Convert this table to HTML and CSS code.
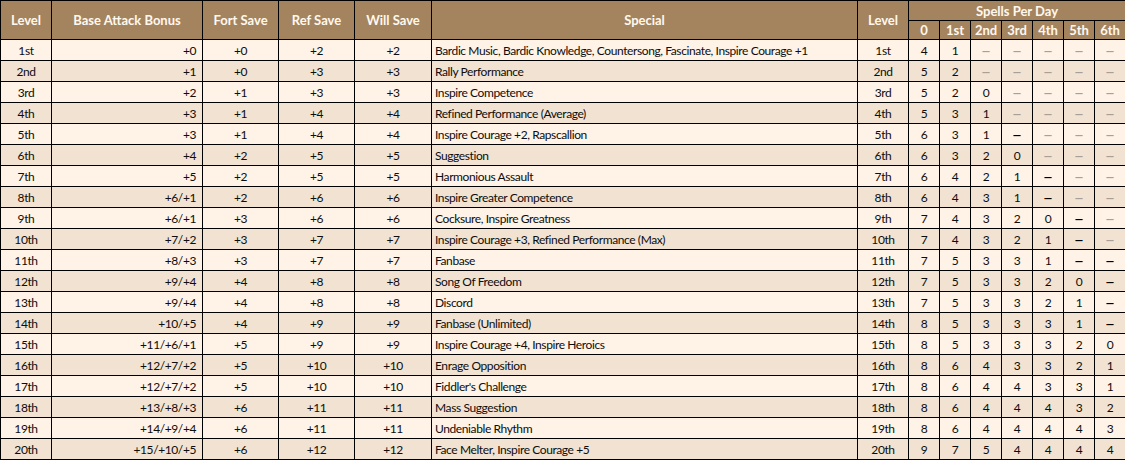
FILE: index.html
```html
<!DOCTYPE html>
<html>
<head>
<meta charset="utf-8">
<link rel="stylesheet" href="styles.css">
</head>
<body>
<table class="prog">
<colgroup>
<col class="c-lvl"><col class="c-bab"><col class="c-save"><col class="c-save"><col class="c-will"><col class="c-spec"><col class="c-lvl"><col class="c-sp"><col class="c-sp"><col class="c-sp"><col class="c-sp"><col class="c-sp"><col class="c-sp"><col class="c-sp">
</colgroup>
<thead>
<tr class="h1">
<th rowspan="2">Level</th><th rowspan="2">Base Attack Bonus</th><th rowspan="2">Fort Save</th><th rowspan="2">Ref Save</th><th rowspan="2">Will Save</th><th rowspan="2">Special</th><th rowspan="2">Level</th><th colspan="7">Spells Per Day</th>
</tr>
<tr class="h2">
<th>0</th><th>1st</th><th>2nd</th><th>3rd</th><th>4th</th><th>5th</th><th>6th</th>
</tr>
</thead>
<tbody>
<tr><td>1st</td><td class="r">+0</td><td>+0</td><td>+2</td><td>+2</td><td class="l">Bardic Music, Bardic Knowledge, Countersong, Fascinate, Inspire Courage +1</td><td>1st</td><td>4</td><td>1</td><td class="g">–</td><td class="g">–</td><td class="g">–</td><td class="g">–</td><td class="g">–</td></tr>
<tr><td>2nd</td><td class="r">+1</td><td>+0</td><td>+3</td><td>+3</td><td class="l">Rally Performance</td><td>2nd</td><td>5</td><td>2</td><td class="g">–</td><td class="g">–</td><td class="g">–</td><td class="g">–</td><td class="g">–</td></tr>
<tr><td>3rd</td><td class="r">+2</td><td>+1</td><td>+3</td><td>+3</td><td class="l">Inspire Competence</td><td>3rd</td><td>5</td><td>2</td><td>0</td><td class="g">–</td><td class="g">–</td><td class="g">–</td><td class="g">–</td></tr>
<tr><td>4th</td><td class="r">+3</td><td>+1</td><td>+4</td><td>+4</td><td class="l">Refined Performance (Average)</td><td>4th</td><td>5</td><td>3</td><td>1</td><td class="g">–</td><td class="g">–</td><td class="g">–</td><td class="g">–</td></tr>
<tr><td>5th</td><td class="r">+3</td><td>+1</td><td>+4</td><td>+4</td><td class="l">Inspire Courage +2, Rapscallion</td><td>5th</td><td>6</td><td>3</td><td>1</td><td class="b">–</td><td class="g">–</td><td class="g">–</td><td class="g">–</td></tr>
<tr><td>6th</td><td class="r">+4</td><td>+2</td><td>+5</td><td>+5</td><td class="l">Suggestion</td><td>6th</td><td>6</td><td>3</td><td>2</td><td>0</td><td class="g">–</td><td class="g">–</td><td class="g">–</td></tr>
<tr><td>7th</td><td class="r">+5</td><td>+2</td><td>+5</td><td>+5</td><td class="l">Harmonious Assault</td><td>7th</td><td>6</td><td>4</td><td>2</td><td>1</td><td class="b">–</td><td class="g">–</td><td class="g">–</td></tr>
<tr><td>8th</td><td class="r">+6/+1</td><td>+2</td><td>+6</td><td>+6</td><td class="l">Inspire Greater Competence</td><td>8th</td><td>6</td><td>4</td><td>3</td><td>1</td><td class="b">–</td><td class="g">–</td><td class="g">–</td></tr>
<tr><td>9th</td><td class="r">+6/+1</td><td>+3</td><td>+6</td><td>+6</td><td class="l">Cocksure, Inspire Greatness</td><td>9th</td><td>7</td><td>4</td><td>3</td><td>2</td><td>0</td><td class="b">–</td><td class="g">–</td></tr>
<tr><td>10th</td><td class="r">+7/+2</td><td>+3</td><td>+7</td><td>+7</td><td class="l">Inspire Courage +3, Refined Performance (Max)</td><td>10th</td><td>7</td><td>4</td><td>3</td><td>2</td><td>1</td><td class="b">–</td><td class="g">–</td></tr>
<tr><td>11th</td><td class="r">+8/+3</td><td>+3</td><td>+7</td><td>+7</td><td class="l">Fanbase</td><td>11th</td><td>7</td><td>5</td><td>3</td><td>3</td><td>1</td><td class="b">–</td><td class="b">–</td></tr>
<tr><td>12th</td><td class="r">+9/+4</td><td>+4</td><td>+8</td><td>+8</td><td class="l">Song Of Freedom</td><td>12th</td><td>7</td><td>5</td><td>3</td><td>3</td><td>2</td><td>0</td><td class="b">–</td></tr>
<tr><td>13th</td><td class="r">+9/+4</td><td>+4</td><td>+8</td><td>+8</td><td class="l">Discord</td><td>13th</td><td>7</td><td>5</td><td>3</td><td>3</td><td>2</td><td>1</td><td class="b">–</td></tr>
<tr><td>14th</td><td class="r">+10/+5</td><td>+4</td><td>+9</td><td>+9</td><td class="l">Fanbase (Unlimited)</td><td>14th</td><td>8</td><td>5</td><td>3</td><td>3</td><td>3</td><td>1</td><td class="b">–</td></tr>
<tr><td>15th</td><td class="r">+11/+6/+1</td><td>+5</td><td>+9</td><td>+9</td><td class="l">Inspire Courage +4, Inspire Heroics</td><td>15th</td><td>8</td><td>5</td><td>3</td><td>3</td><td>3</td><td>2</td><td>0</td></tr>
<tr><td>16th</td><td class="r">+12/+7/+2</td><td>+5</td><td>+10</td><td>+10</td><td class="l">Enrage Opposition</td><td>16th</td><td>8</td><td>6</td><td>4</td><td>3</td><td>3</td><td>2</td><td>1</td></tr>
<tr><td>17th</td><td class="r">+12/+7/+2</td><td>+5</td><td>+10</td><td>+10</td><td class="l">Fiddler's Challenge</td><td>17th</td><td>8</td><td>6</td><td>4</td><td>4</td><td>3</td><td>3</td><td>1</td></tr>
<tr><td>18th</td><td class="r">+13/+8/+3</td><td>+6</td><td>+11</td><td>+11</td><td class="l">Mass Suggestion</td><td>18th</td><td>8</td><td>6</td><td>4</td><td>4</td><td>4</td><td>3</td><td>2</td></tr>
<tr><td>19th</td><td class="r">+14/+9/+4</td><td>+6</td><td>+11</td><td>+11</td><td class="l">Undeniable Rhythm</td><td>19th</td><td>8</td><td>6</td><td>4</td><td>4</td><td>4</td><td>4</td><td>3</td></tr>
<tr><td>20th</td><td class="r">+15/+10/+5</td><td>+6</td><td>+12</td><td>+12</td><td class="l">Face Melter, Inspire Courage +5</td><td>20th</td><td>9</td><td>7</td><td>5</td><td>4</td><td>4</td><td>4</td><td>4</td></tr>
</tbody>
</table>
</body>
</html>
```
FILE: styles.css
```css
html, body {
  margin: 0;
  padding: 0;
  background: #ffffff;
}

.prog {
  border-collapse: collapse;
  table-layout: fixed;
  width: 1125px;
  font-family: "Lato", "Liberation Sans", sans-serif;
  font-size: 12px;
  color: #0d0d0d;
}

.c-lvl { width: 51px; }
.c-bab { width: 151px; }
.c-save { width: 76px; }
.c-will { width: 77px; }
.c-spec { width: 426px; }
.c-sp { width: 31px; }

.prog th,
.prog td {
  border: 1px solid #000000;
  padding: 0 4px;
  text-align: center;
  vertical-align: middle;
  white-space: nowrap;
  overflow: hidden;
}

.prog th {
  background: #a4845f;
  color: #fff8ee;
  font-weight: bold;
  font-size: 13px;
}

.h1 th { height: 19px; }
.h2 th { height: 18px; padding: 0; }

.prog td {
  height: 20px;
  padding-top: 0;
  padding-bottom: 0;
  letter-spacing: -0.4px;
}

.prog tbody tr:nth-child(odd) td { background: #fff2e6; }
.prog tbody tr:nth-child(even) td { background: #f1e2d2; }

.prog td.r { text-align: right; padding-right: 6px; }
.prog td.l { text-align: left; padding-left: 3px; }
.prog td.g {
  color: #a8a098;
  font-size: 18px;
  line-height: 1;
  letter-spacing: 0;
}
.prog td.b {
  color: #000000;
  font-size: 18px;
  line-height: 1;
  letter-spacing: 0;
}
```
